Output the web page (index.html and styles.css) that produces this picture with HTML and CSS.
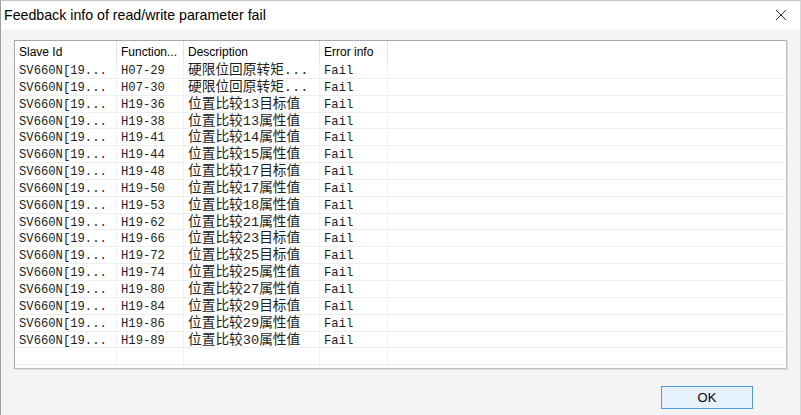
FILE: index.html
```html
<!DOCTYPE html>
<html>
<head>
<meta charset="utf-8">
<link rel="stylesheet" href="styles.css">
</head>
<body>
<div class="window">
  <div class="titlebar">
    <span class="title">Feedback info of read/write parameter fail</span>
    <svg class="close" width="12" height="12" viewBox="0 0 12 12"><path d="M1 1L11 11M11 1L1 11" stroke="#222" stroke-width="1" fill="none"/></svg>
  </div>
  <div class="content">
    <div class="listbox">
      <div class="row head">
        <div class="cell">Slave Id</div>
        <div class="cell">Function...</div>
        <div class="cell">Description</div>
        <div class="cell">Error info</div>
        <div class="cell fill"></div>
      </div>
      <div class="row"><div class="cell">SV660N[19...</div><div class="cell">H07-29</div><div class="cell desc">硬限位回原转矩...</div><div class="cell">Fail</div><div class="cell fill"></div></div>
      <div class="row"><div class="cell">SV660N[19...</div><div class="cell">H07-30</div><div class="cell desc">硬限位回原转矩...</div><div class="cell">Fail</div><div class="cell fill"></div></div>
      <div class="row"><div class="cell">SV660N[19...</div><div class="cell">H19-36</div><div class="cell desc">位置比较13目标值</div><div class="cell">Fail</div><div class="cell fill"></div></div>
      <div class="row"><div class="cell">SV660N[19...</div><div class="cell">H19-38</div><div class="cell desc">位置比较13属性值</div><div class="cell">Fail</div><div class="cell fill"></div></div>
      <div class="row"><div class="cell">SV660N[19...</div><div class="cell">H19-41</div><div class="cell desc">位置比较14属性值</div><div class="cell">Fail</div><div class="cell fill"></div></div>
      <div class="row"><div class="cell">SV660N[19...</div><div class="cell">H19-44</div><div class="cell desc">位置比较15属性值</div><div class="cell">Fail</div><div class="cell fill"></div></div>
      <div class="row"><div class="cell">SV660N[19...</div><div class="cell">H19-48</div><div class="cell desc">位置比较17目标值</div><div class="cell">Fail</div><div class="cell fill"></div></div>
      <div class="row"><div class="cell">SV660N[19...</div><div class="cell">H19-50</div><div class="cell desc">位置比较17属性值</div><div class="cell">Fail</div><div class="cell fill"></div></div>
      <div class="row"><div class="cell">SV660N[19...</div><div class="cell">H19-53</div><div class="cell desc">位置比较18属性值</div><div class="cell">Fail</div><div class="cell fill"></div></div>
      <div class="row"><div class="cell">SV660N[19...</div><div class="cell">H19-62</div><div class="cell desc">位置比较21属性值</div><div class="cell">Fail</div><div class="cell fill"></div></div>
      <div class="row"><div class="cell">SV660N[19...</div><div class="cell">H19-66</div><div class="cell desc">位置比较23目标值</div><div class="cell">Fail</div><div class="cell fill"></div></div>
      <div class="row"><div class="cell">SV660N[19...</div><div class="cell">H19-72</div><div class="cell desc">位置比较25目标值</div><div class="cell">Fail</div><div class="cell fill"></div></div>
      <div class="row"><div class="cell">SV660N[19...</div><div class="cell">H19-74</div><div class="cell desc">位置比较25属性值</div><div class="cell">Fail</div><div class="cell fill"></div></div>
      <div class="row"><div class="cell">SV660N[19...</div><div class="cell">H19-80</div><div class="cell desc">位置比较27属性值</div><div class="cell">Fail</div><div class="cell fill"></div></div>
      <div class="row"><div class="cell">SV660N[19...</div><div class="cell">H19-84</div><div class="cell desc">位置比较29目标值</div><div class="cell">Fail</div><div class="cell fill"></div></div>
      <div class="row"><div class="cell">SV660N[19...</div><div class="cell">H19-86</div><div class="cell desc">位置比较29属性值</div><div class="cell">Fail</div><div class="cell fill"></div></div>
      <div class="row"><div class="cell">SV660N[19...</div><div class="cell">H19-89</div><div class="cell desc">位置比较30属性值</div><div class="cell">Fail</div><div class="cell fill"></div></div>
      <div class="row"><div class="cell"></div><div class="cell"></div><div class="cell desc"></div><div class="cell"></div><div class="cell fill"></div></div>
      <div class="row tail"><div class="cell"></div><div class="cell"></div><div class="cell desc"></div><div class="cell"></div><div class="cell fill"></div></div>
    </div>
    <div class="buttons">
      <button class="ok">OK</button>
    </div>
  </div>
</div>
</body>
</html>
```

FILE: styles.css
```css
html, body {
  margin: 0;
  padding: 0;
  background: #f4f4f4;
}
.window {
  box-sizing: border-box;
  width: 801px;
  height: 415px;
  border-left: 1px solid #9c9c9c;
  border-top: 1px solid #c4c4c4;
  border-right: 1px solid #d8d8d8;
  background: #f4f4f4;
  display: flex;
  flex-direction: column;
  overflow: hidden;
}
.titlebar {
  height: 28px;
  background: #ffffff;
  display: flex;
  align-items: center;
  justify-content: space-between;
  padding: 0 13px 0 3px;
  flex: none;
}
.title {
  font-family: "Liberation Sans", Arial, sans-serif;
  font-size: 14.2px;
  color: #000;
  padding-bottom: 1px;
}
.close {
  display: block;
  margin-top: -1px;
}
.content {
  flex: 1;
  display: flex;
  flex-direction: column;
  padding: 11px 13px 0 13px;
}
.listbox {
  box-sizing: border-box;
  height: 329px;
  background: #fff;
  border: 1px solid #a7a7a7;
  border-right-color: #bdbdbd;
  border-bottom-color: #bdbdbd;
  box-shadow: 1px 1px 0 #dcdcdc;
  overflow: hidden;
}
.row {
  box-sizing: border-box;
  display: grid;
  grid-template-columns: 102px 67px 136px 68px 1fr;
  height: 16.85px;
  border-bottom: 1px solid #efefef;
  font-family: "Liberation Mono", "Noto Sans CJK SC", monospace;
  font-size: 12.2px;
  line-height: 15px;
  color: #1e1e1e;
}
.row.head {
  height: 21px;
  border-bottom: none;
  font-family: "Liberation Sans", Arial, sans-serif;
  font-size: 12px;
  color: #000;
}
.row.tail {
  border-bottom: none;
}
.cell {
  box-sizing: border-box;
  border-right: 1px solid #f0f0f0;
  padding-left: 4px;
  padding-top: 2px;
  white-space: nowrap;
}
.head .cell {
  border-right-color: #e3e3e3;
  padding-top: 4px;
}
.cell.desc {
  font-size: 13.7px;
  padding-top: 1px;
}
.cell.fill {
  border-right: none;
}
.buttons {
  display: flex;
  justify-content: flex-end;
  padding: 17px 34px 0 0;
}
.ok {
  box-sizing: border-box;
  width: 92px;
  height: 23px;
  background: #e5f1fb;
  border: 1px solid #4a9be0;
  font-family: "Liberation Sans", Arial, sans-serif;
  font-size: 13px;
  color: #000;
  padding: 0;
  margin: 0;
}
```
